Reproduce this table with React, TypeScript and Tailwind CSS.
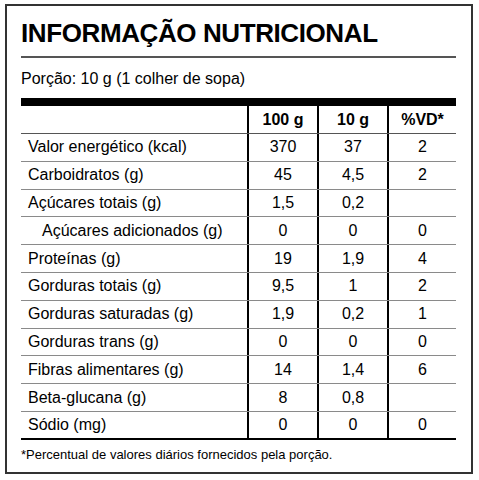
import React from "react";

type Row = { label: string; a: string; b: string; c: string; indent?: boolean };

const rows: Row[] = [
  { label: "Valor energético (kcal)", a: "370", b: "37", c: "2" },
  { label: "Carboidratos (g)", a: "45", b: "4,5", c: "2" },
  { label: "Açúcares totais (g)", a: "1,5", b: "0,2", c: "" },
  { label: "Açúcares adicionados (g)", a: "0", b: "0", c: "0", indent: true },
  { label: "Proteínas (g)", a: "19", b: "1,9", c: "4" },
  { label: "Gorduras totais (g)", a: "9,5", b: "1", c: "2" },
  { label: "Gorduras saturadas (g)", a: "1,9", b: "0,2", c: "1" },
  { label: "Gorduras trans (g)", a: "0", b: "0", c: "0" },
  { label: "Fibras alimentares (g)", a: "14", b: "1,4", c: "6" },
  { label: "Beta-glucana (g)", a: "8", b: "0,8", c: "" },
  { label: "Sódio (mg)", a: "0", b: "0", c: "0" },
];

export default function App() {
  return (
    <div
      className="w-[479px] h-[480px] bg-white pl-[5px] pt-[4px] text-black"
      style={{ fontFamily: '"Liberation Sans", Arial, sans-serif' }}
    >
      <div className="w-[468px] h-[470px] border-2 border-[#333] pl-[14px] pr-[15px] pt-[12px] flex flex-col">
        <div className="text-[26px] leading-[30px] font-bold tracking-[-0.4px]">
          INFORMAÇÃO NUTRICIONAL
        </div>
        <div className="mt-[8px] h-[2px] bg-[#555]" />
        <div className="mt-[11px] text-[16px] leading-[20px]">Porção: 10 g (1 colher de sopa)</div>
        <div className="mt-[9px] h-[8px] bg-black" />
        <div className="flex flex-col">
          <div className="flex h-[28px] border-b border-[#555] text-[16px] font-bold">
            <div className="w-[226px]" />
            <div className="w-[70px] border-l-2 border-black flex items-center justify-center">100 g</div>
            <div className="w-[70px] border-l-2 border-black flex items-center justify-center">10 g</div>
            <div className="flex-1 border-l-2 border-black flex items-center justify-center">%VD*</div>
          </div>
          {rows.map((r, i) => (
            <div
              key={r.label}
              className={
                i === rows.length - 1
                  ? "flex h-[28px] border-b-2 border-black text-[16px]"
                  : "flex h-[27.8px] border-b border-[#8a8a8a] text-[16px]"
              }
            >
              <div className={r.indent ? "w-[226px] pl-[21px] flex items-center" : "w-[226px] pl-[7px] flex items-center"}>
                {r.label}
              </div>
              <div className="w-[70px] border-l-2 border-black flex items-center justify-center">{r.a}</div>
              <div className="w-[70px] border-l-2 border-black flex items-center justify-center">{r.b}</div>
              <div className="flex-1 border-l-2 border-black flex items-center justify-center">{r.c}</div>
            </div>
          ))}
        </div>
        <div className="mt-[7px] text-[13px] leading-[16px]">
          *Percentual de valores diários fornecidos pela porção.
        </div>
      </div>
    </div>
  );
}
